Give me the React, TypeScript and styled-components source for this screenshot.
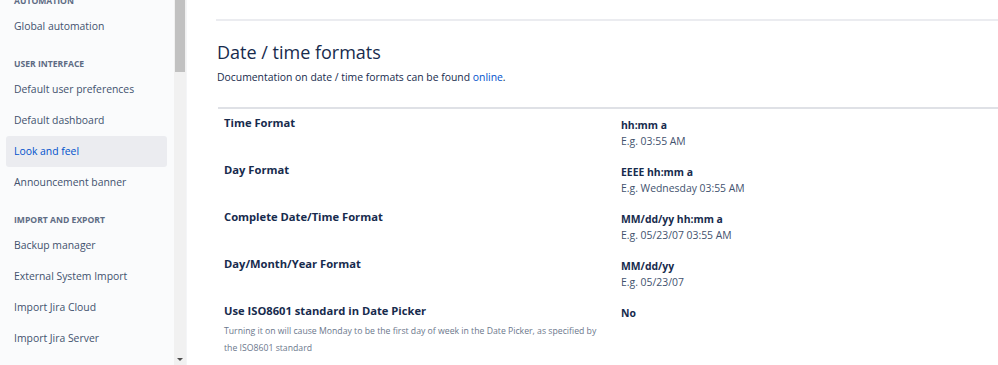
import styled, {createGlobalStyle} from 'styled-components';

const GlobalStyle = createGlobalStyle`
  html, body {
    margin: 0;
    padding: 0;
    background: #ffffff;
    font-family: "Open Sans", "Noto Sans", sans-serif;
    color: #172b4d;
  }
  * {
    box-sizing: border-box;
  }
`;

const Page = styled.div`
  display: flex;
  flex-direction: row;
  width: 998px;
  height: 365px;
  overflow: hidden;
`;

const Sidebar = styled.nav`
  width: 174px;
  flex: none;
  background: #fafbfc;
  overflow: hidden;
`;

const NavList = styled.div`
  display: flex;
  flex-direction: column;
  margin-top: -21px;
  padding: 0 7px 0 6px;
`;

const NavHeading = styled.div`
  margin: 14px 0 2px;
  padding-left: 8px;
  height: 16px;
  line-height: 16px;
  font-size: 8.6px;
  font-weight: 700;
  color: #5e6c84;
  text-transform: uppercase;
`;

const NavItem = styled.div<{ $active?: boolean }>`
  height: 31px;
  line-height: 31px;
  padding-left: 8px;
  border-radius: 3px;
  font-size: 10.4px;
  color: ${({$active}) => ($active ? '#0052cc' : '#42526e')};
  background: ${({$active}) => ($active ? '#ebecf0' : 'transparent')};
  white-space: nowrap;
`;

const ScrollTrack = styled.div`
  width: 13px;
  flex: none;
  background: #f1f1f1;
  display: flex;
  flex-direction: column;
  align-items: center;
  justify-content: space-between;
  padding: 0 0 4px;
  border-right: 1px solid #f4f5f7;
`;

const ScrollThumb = styled.div`
  width: 10px;
  height: 72px;
  background: #c1c1c1;
`;

const ScrollArrow = styled.div`
  width: 0;
  height: 0;
  border-left: 3px solid transparent;
  border-right: 3px solid transparent;
  border-top: 3px solid #505050;
`;

const Main = styled.main`
  flex: 1;
  min-width: 0;
  padding: 19px 0 0 29px;
  display: flex;
  flex-direction: column;
`;

const TopRule = styled.div`
  border-top: 2px solid #ebecf0;
`;

const Title = styled.h2`
  margin: 18px 0 0 1px;
  font-size: 18px;
  font-weight: 400;
  line-height: 26px;
  color: #172b4d;
`;

const Description = styled.p`
  margin: 4px 0 0 1px;
  font-size: 10.4px;
  line-height: 16px;
  color: #172b4d;
`;

const Link = styled.a`
  color: #0052cc;
  text-decoration: none;
`;

const Table = styled.div`
  margin: 22px 0 0 2px;
  border-top: 2px solid #dfe1e6;
  display: flex;
  flex-direction: column;
`;

const Row = styled.div`
  display: grid;
  grid-template-columns: 397px 1fr;
  height: 47px;
`;

const LabelCell = styled.div`
  padding: 6px 6px 0;
`;

const Label = styled.div`
  font-size: 11.2px;
  font-weight: 700;
  line-height: 16px;
  color: #172b4d;
`;

const Hint = styled.div`
  margin-top: 4px;
  font-size: 8.7px;
  line-height: 17px;
  color: #6b778c;
`;

const ValueCell = styled.div`
  padding: 8px 6px 0;
`;

const Value = styled.div`
  font-size: 10.4px;
  font-weight: 700;
  line-height: 16px;
  color: #172b4d;
`;

const Example = styled.div`
  font-size: 10.4px;
  line-height: 16px;
  color: #42526e;
`;

type NavEntry = { heading: string } | { label: string; active?: boolean };

const nav: NavEntry[] = [
	{heading: 'Automation'},
	{label: 'Global automation'},
	{heading: 'User interface'},
	{label: 'Default user preferences'},
	{label: 'Default dashboard'},
	{label: 'Look and feel', active: true},
	{label: 'Announcement banner'},
	{heading: 'Import and export'},
	{label: 'Backup manager'},
	{label: 'External System Import'},
	{label: 'Import Jira Cloud'},
	{label: 'Import Jira Server'},
];

interface Format {
	label: string;
	hint?: string;
	value: string;
	example?: string;
}

const formats: Format[] = [
	{label: 'Time Format', value: 'hh:mm a', example: 'E.g. 03:55 AM'},
	{label: 'Day Format', value: 'EEEE hh:mm a', example: 'E.g. Wednesday 03:55 AM'},
	{label: 'Complete Date/Time Format', value: 'MM/dd/yy hh:mm a', example: 'E.g. 05/23/07 03:55 AM'},
	{label: 'Day/Month/Year Format', value: 'MM/dd/yy', example: 'E.g. 05/23/07'},
	{
		label: 'Use ISO8601 standard in Date Picker',
		hint: 'Turning it on will cause Monday to be the first day of week in the Date Picker, as specified by the ISO8601 standard',
		value: 'No',
	},
];

export default function App() {
	return (
		<>
			<GlobalStyle/>
			<Page>
				<Sidebar>
					<NavList>
						{nav.map((entry, i) =>
							'heading' in entry
								? <NavHeading key={i}>{entry.heading}</NavHeading>
								: <NavItem key={i} $active={entry.active}>{entry.label}</NavItem>
						)}
					</NavList>
				</Sidebar>
				<ScrollTrack>
					<ScrollThumb/>
					<ScrollArrow/>
				</ScrollTrack>
				<Main>
					<TopRule/>
					<Title>Date / time formats</Title>
					<Description>
						Documentation on date / time formats can be found <Link href="#">online</Link>.
					</Description>
					<Table>
						{formats.map(f => (
							<Row key={f.label}>
								<LabelCell>
									<Label>{f.label}</Label>
									{f.hint && <Hint>{f.hint}</Hint>}
								</LabelCell>
								<ValueCell>
									<Value>{f.value}</Value>
									{f.example && <Example>{f.example}</Example>}
								</ValueCell>
							</Row>
						))}
					</Table>
				</Main>
			</Page>
		</>
	);
}
